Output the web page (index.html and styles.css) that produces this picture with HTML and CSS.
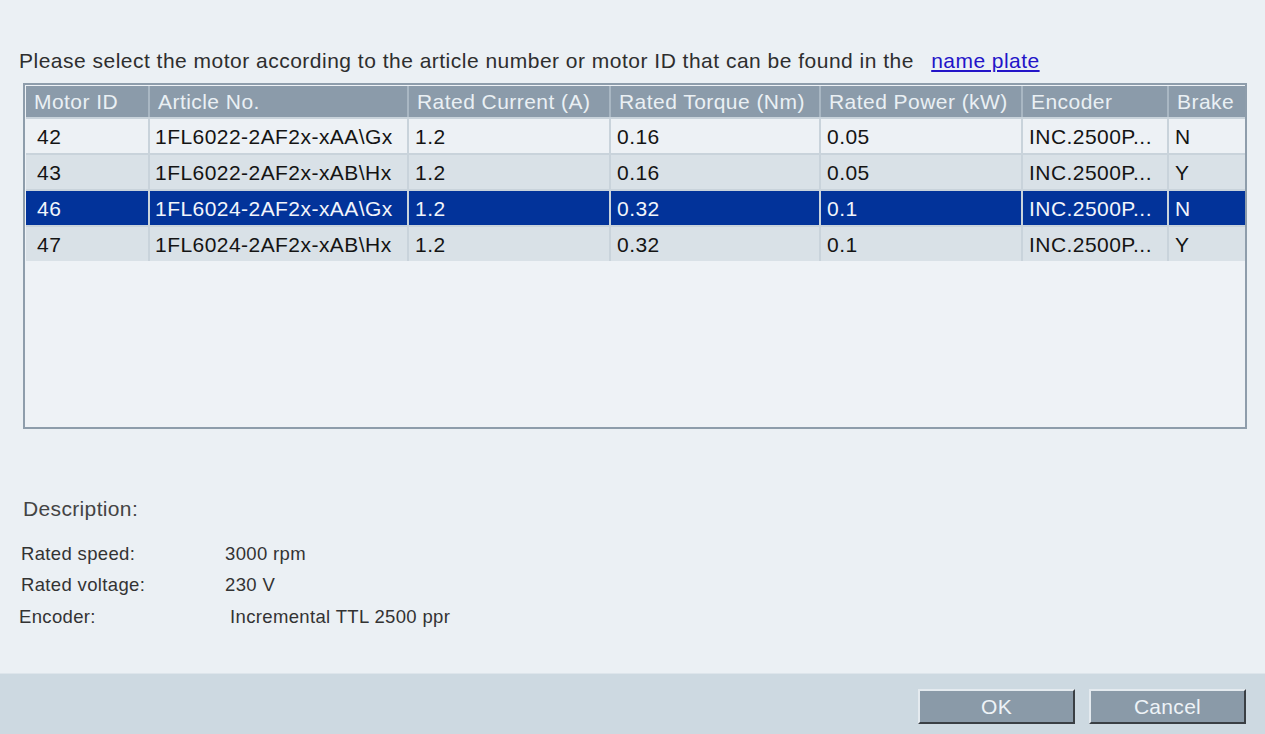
FILE: index.html
```html
<!DOCTYPE html>
<html lang="en">
<head>
<meta charset="utf-8">
<title>Motor selection</title>
<link rel="stylesheet" href="styles.css">
</head>
<body>
<div class="dialog">
  <div class="main">
    <p class="prompt">Please select the motor according to the article number or motor ID that can be found in the <a class="link" href="#">name plate</a></p>
    <div class="grid-box">
      <table class="grid">
        <colgroup>
          <col class="c1"><col class="c2"><col class="c3"><col class="c4"><col class="c5"><col class="c6"><col class="c7">
        </colgroup>
        <thead>
          <tr>
            <th>Motor ID</th><th>Article No.</th><th>Rated Current (A)</th><th>Rated Torque (Nm)</th><th>Rated Power (kW)</th><th>Encoder</th><th class="last">Brake</th>
          </tr>
        </thead>
        <tbody>
          <tr class="odd">
            <td class="id">42</td><td class="art">1FL6022-2AF2x-xAA\Gx</td><td>1.2</td><td>0.16</td><td>0.05</td><td>INC.2500P...</td><td class="last">N</td>
          </tr>
          <tr class="even">
            <td class="id">43</td><td class="art">1FL6022-2AF2x-xAB\Hx</td><td>1.2</td><td>0.16</td><td>0.05</td><td>INC.2500P...</td><td class="last">Y</td>
          </tr>
          <tr class="selected">
            <td class="id">46</td><td class="art">1FL6024-2AF2x-xAA\Gx</td><td>1.2</td><td>0.32</td><td>0.1</td><td>INC.2500P...</td><td class="last">N</td>
          </tr>
          <tr class="even">
            <td class="id">47</td><td class="art">1FL6024-2AF2x-xAB\Hx</td><td>1.2</td><td>0.32</td><td>0.1</td><td>INC.2500P...</td><td class="last">Y</td>
          </tr>
        </tbody>
      </table>
    </div>
    <div class="desc">
      <div class="desc-title">Description:</div>
      <div class="desc-row"><span class="label">Rated speed:</span><span class="value">3000 rpm</span></div>
      <div class="desc-row"><span class="label">Rated voltage:</span><span class="value">230 V</span></div>
      <div class="desc-row desc-row-enc"><span class="label">Encoder:</span><span class="value">Incremental TTL 2500 ppr</span></div>
    </div>
  </div>
  <div class="footer">
    <button class="btn" type="button">OK</button>
    <button class="btn" type="button">Cancel</button>
  </div>
</div>
</body>
</html>
```

FILE: styles.css
```css
html, body {
  margin: 0;
  padding: 0;
}

body {
  background: #ebf0f4;
  font-family: "Liberation Sans", Arial, sans-serif;
  color: #2b2b2b;
}

.dialog {
  width: 1265px;
  height: 734px;
  display: flex;
  flex-direction: column;
  overflow: hidden;
}

.main {
  flex: 1;
  padding: 48px 18px 0 23px;
}

.prompt {
  margin: 0 0 9px -4px;
  font-size: 21px;
  line-height: 26px;
  letter-spacing: 0.49px;
  color: #2e2e2e;
  white-space: nowrap;
}

.link {
  margin-left: 11px;
  color: #2314c8;
  text-decoration: underline;
  letter-spacing: 0.45px;
}

.grid-box {
  height: 340px;
  border: 2px solid #8e9dab;
  padding: 1px;
  background: #eef2f6;
}

.grid {
  width: 1219px;
  table-layout: fixed;
  border-collapse: separate;
  border-spacing: 0;
  font-size: 21px;
  letter-spacing: 0.45px;
}

.c1 { width: 124px; }
.c2 { width: 259px; }
.c3 { width: 202px; }
.c4 { width: 210px; }
.c5 { width: 202px; }
.c6 { width: 146px; }
.c7 { width: 76px; }

.grid th {
  height: 31px;
  padding: 0 0 0 8px;
  background: #8b9baa;
  color: #eaf0f4;
  font-weight: normal;
  text-align: left;
  border-right: 2px solid #a9b7c3;
  white-space: nowrap;
  overflow: hidden;
}

.grid td {
  box-sizing: border-box;
  height: 36px;
  padding: 2px 0 0 6px;
  border-top: 2px solid #c9d3db;
  border-right: 2px solid #c9d3db;
  color: #141414;
  white-space: nowrap;
  overflow: hidden;
}

.grid td.id {
  padding-left: 11px;
}

.grid td.art {
  padding-left: 5px;
}

.grid th.last,
.grid td.last {
  border-right: 0;
}

.odd td {
  background: #edf1f5;
}

.even td {
  background: #d9e1e7;
}

.selected td {
  background: #02339a;
  color: #f2f5fb;
  border-right-color: #c9d3db;
}

.desc {
  padding-top: 67px;
}

.desc-title {
  font-size: 21px;
  line-height: 26px;
  letter-spacing: 0.35px;
  color: #444;
  margin-bottom: 16px;
}

.desc-row {
  display: flex;
  margin-left: -2px;
  font-size: 18.5px;
  line-height: 31px;
  letter-spacing: 0.35px;
  color: #333;
}

.desc-row .label {
  width: 204px;
}

.desc-row-enc {
  margin-left: -4px;
  margin-top: 1px;
}

.desc-row-enc .label {
  width: 211px;
}

.footer {
  flex: none;
  height: 61px;
  box-sizing: border-box;
  border-top: 1px solid #dde5eb;
  background: #cdd9e1;
  display: flex;
  justify-content: flex-end;
  align-items: flex-start;
  gap: 14px;
  padding: 15px 19px 0 0;
}

.btn {
  width: 157px;
  height: 35px;
  padding: 0;
  background: #8a9aa8;
  color: #eef3f7;
  font-family: "Liberation Sans", Arial, sans-serif;
  font-size: 21px;
  letter-spacing: 0.3px;
  line-height: 29px;
  border-style: solid;
  border-width: 2px;
  border-color: #e4eaef #3a3f44 #3a3f44 #e4eaef;
  cursor: pointer;
}
```
